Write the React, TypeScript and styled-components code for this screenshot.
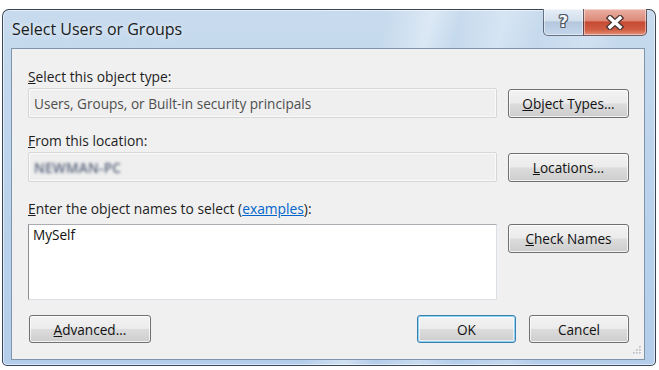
import React from "react";
import styled, { createGlobalStyle } from "styled-components";

const GlobalStyle = createGlobalStyle`
  html, body { margin: 0; padding: 0; background: #ffffff; }
  body { font-family: "Open Sans", "Noto Sans", "Liberation Sans", sans-serif; }
  * { box-sizing: border-box; }
`;

const Window = styled.div`
  margin: 9px 0 0 2px;
  width: 654px;
  height: 357px;
  border: 1px solid rgba(35, 45, 60, 0.85);
  border-radius: 7px 7px 5px 5px;
  background:
    linear-gradient(104deg, transparent 52%, rgba(255,255,255,0.38) 58%, transparent 62%, rgba(255,255,255,0.28) 68%, transparent 73%, rgba(255,255,255,0.2) 80%, transparent 84%),
    linear-gradient(to bottom, #c8dbee 0%, #bcd4ec 40%, #b3cdea 100%);
  box-shadow: inset 0 0 0 1px rgba(255,255,255,0.55);
  display: flex;
  flex-direction: column;
`;

const TitleBar = styled.div`
  height: 38px;
  display: flex;
  justify-content: space-between;
  align-items: flex-start;
  padding: 0 8px 0 9px;
`;

const TitleText = styled.div`
  padding-top: 9px;
  font-size: 16px;
  line-height: 20px;
  color: #1b1b1b;
  text-shadow: 0 0 6px rgba(255,255,255,0.9);
`;

const CaptionGroup = styled.div`
  display: flex;
  margin-top: -1px;
`;

const CaptionButton = styled.div<{ $variant: "help" | "close" }>`
  height: 27px;
  width: ${(p) => (p.$variant === "help" ? "40px" : "64px")};
  display: flex;
  align-items: center;
  justify-content: center;
  border: 1px solid rgba(40, 50, 70, 0.65);
  border-top: none;
  ${(p) => (p.$variant === "help" ? "border-right: none;" : "")}
  border-radius: ${(p) => (p.$variant === "help" ? "0 0 0 5px" : "0 0 5px 0")};
  background: ${(p) =>
    p.$variant === "help"
      ? "linear-gradient(to bottom, #e6eef7 0%, #d3dfec 45%, #b4c7dc 50%, #c3d6eb 100%)"
      : "linear-gradient(to bottom, #eab1a4 0%, #dc8a78 45%, #c74a33 50%, #cf5e43 80%, #e49279 100%)"};
  box-shadow: inset 0 0 0 1px rgba(255,255,255,0.45);
`;

const HelpGlyph = styled.span`
  font-family: "DejaVu Sans", sans-serif;
  font-weight: bold;
  font-size: 16px;
  line-height: 16px;
  color: #f4f6f9;
  text-shadow:
    1px 0 0 #4d5866, -1px 0 0 #4d5866, 0 1px 0 #4d5866, 0 -1px 0 #4d5866,
    1px 1px 0 #4d5866, -1px -1px 0 #4d5866, 1px -1px 0 #4d5866, -1px 1px 0 #4d5866;
`;

const Client = styled.div`
  flex: 1;
  margin: 0 10px 5px 8px;
  border: 1px solid #8094ab;
  background: #f0f0f0;
  padding: 20px 15px 16px 16px;
  display: flex;
  flex-direction: column;
  position: relative;
`;

const Label = styled.div<{ $gap: number }>`
  margin-top: ${(p) => p.$gap}px;
  font-size: 13.8px;
  line-height: 16px;
  color: #1e1e1e;
  white-space: nowrap;
`;

const Key = styled.span`
  text-decoration: underline;
`;

const Link = styled.span`
  color: #0066cc;
  text-decoration: underline;
`;

const FieldRow = styled.div<{ $gap: number }>`
  margin-top: ${(p) => p.$gap}px;
  display: grid;
  grid-template-columns: 469px 121px;
  column-gap: 11px;
  align-items: start;
`;

const ReadonlyField = styled.div`
  height: 30px;
  border: 1px solid #d6d6d6;
  border-radius: 2px;
  background: #efefef;
  box-shadow: inset 0 0 0 1px rgba(255,255,255,0.7);
  padding: 0 5px;
  display: flex;
  align-items: center;
  font-size: 13.6px;
  color: #4e4e4e;
  white-space: nowrap;
`;

const Blurred = styled.span`
  filter: blur(1.4px);
  color: #56627a;
  font-weight: 600;
  letter-spacing: 0.3px;
`;

const TextArea = styled.div`
  height: 76px;
  background: #ffffff;
  border: 1px solid #dbdfe6;
  border-top-color: #abadb3;
  border-left-color: #8e8f94;
  padding: 2px 4px;
  font-size: 13.6px;
  line-height: 16px;
  color: #111;
`;

const Button = styled.div<{ $w?: number; $h?: number; $default?: boolean; $offset?: number }>`
  width: ${(p) => (p.$w ? `${p.$w}px` : "100%")};
  height: ${(p) => p.$h ?? 29}px;
  margin-top: ${(p) => p.$offset ?? 0}px;
  border: 1px solid ${(p) => (p.$default ? "#3c7fb1" : "#707070")};
  border-radius: 3px;
  background: linear-gradient(to bottom, #f3f3f3 0%, #ebebeb 48%, #dcdcdc 52%, #cdcdcd 100%);
  box-shadow: ${(p) =>
    p.$default
      ? "inset 0 0 0 1px #8fd2f2, inset 0 0 0 2px rgba(255,255,255,0.6)"
      : "inset 0 0 0 1px rgba(255,255,255,0.75)"};
  display: flex;
  align-items: center;
  justify-content: center;
  font-size: 13.6px;
  color: #111;
  white-space: nowrap;
`;

const BottomRow = styled.div`
  margin-top: 15px;
  display: flex;
  align-items: center;
  padding-left: 1px;
`;

const Spacer = styled.div`
  flex: 1;
`;

const ButtonGroup = styled.div`
  display: flex;
  gap: 13px;
`;

const Grip = styled.svg`
  position: absolute;
  right: 2px;
  bottom: 3px;
`;

export default function App() {
  const dots = [
    [8, 1],
    [5, 4],
    [8, 4],
    [2, 7],
    [5, 7],
    [8, 7],
  ];
  return (
    <>
      <GlobalStyle />
      <Window>
        <TitleBar>
          <TitleText>Select Users or Groups</TitleText>
          <CaptionGroup>
            <CaptionButton $variant="help">
              <HelpGlyph>?</HelpGlyph>
            </CaptionButton>
            <CaptionButton $variant="close">
              <svg width="18" height="15" viewBox="0 0 18 15">
                <path d="M4 3 L14 12 M14 3 L4 12" stroke="#4a3434" strokeWidth="6" strokeLinecap="square" />
                <path d="M4 3 L14 12 M14 3 L4 12" stroke="#ffffff" strokeWidth="3.4" strokeLinecap="square" />
              </svg>
            </CaptionButton>
          </CaptionGroup>
        </TitleBar>
        <Client>
          <Label $gap={0}>
            <Key>S</Key>elect this object type:
          </Label>
          <FieldRow $gap={3}>
            <ReadonlyField>Users, Groups, or Built-in security principals</ReadonlyField>
            <Button $offset={1}>
              <span>
                <Key>O</Key>bject Types...
              </span>
            </Button>
          </FieldRow>
          <Label $gap={15}>
            <Key>F</Key>rom this location:
          </Label>
          <FieldRow $gap={3}>
            <ReadonlyField>
              <Blurred>NEWMAN-PC</Blurred>
            </ReadonlyField>
            <Button $offset={1}>
              <span>
                <Key>L</Key>ocations...
              </span>
            </Button>
          </FieldRow>
          <Label $gap={19}>
            <Key>E</Key>nter the object names to select (<Link>examples</Link>):
          </Label>
          <FieldRow $gap={7}>
            <TextArea>MySelf</TextArea>
            <Button>
              <span>
                <Key>C</Key>heck Names
              </span>
            </Button>
          </FieldRow>
          <BottomRow>
            <Button $w={122} $h={28}>
              <span>
                <Key>A</Key>dvanced...
              </span>
            </Button>
            <Spacer />
            <ButtonGroup>
              <Button $w={99} $h={28} $default>
                OK
              </Button>
              <Button $w={100} $h={28}>
                Cancel
              </Button>
            </ButtonGroup>
          </BottomRow>
          <Grip width="10" height="10" viewBox="0 0 10 10">
            {dots.map(([x, y], i) => (
              <g key={i}>
                <rect x={x} y={y} width="1.5" height="1.5" fill="#ffffff" />
                <rect x={x - 0.8} y={y - 0.8} width="1.5" height="1.5" fill="#a8aeb6" />
              </g>
            ))}
          </Grip>
        </Client>
      </Window>
    </>
  );
}
